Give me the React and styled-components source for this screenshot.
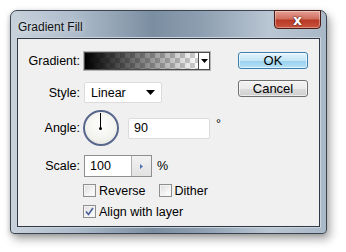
import styled, { createGlobalStyle } from "styled-components";

const GlobalStyle = createGlobalStyle`
  body {
    margin: 0;
    background: #ffffff;
    font-family: "Liberation Sans", Arial, sans-serif;
    font-size: 12px;
    color: #000;
  }
`;

const Page = styled.div`
  width: 346px;
  height: 252px;
  padding: 10px 0 0 10px;
  box-sizing: border-box;
`;

const Window = styled.div`
  width: 317px;
  height: 224px;
  box-sizing: border-box;
  border: 1px solid #3b4450;
  border-radius: 7px 7px 4px 4px;
  background: linear-gradient(
    90deg,
    #c7d1db 0%,
    #aebccb 20%,
    #7b8ea1 45%,
    #8d9eb0 60%,
    #b9c6d3 82%,
    #a9b8c7 100%
  );
  box-shadow: 3px 5px 10px rgba(0, 0, 0, 0.35), -1px 1px 4px rgba(0, 0, 0, 0.15);
  display: flex;
  flex-direction: column;
`;

const TitleBar = styled.div`
  height: 27px;
  display: flex;
  align-items: flex-start;
  justify-content: space-between;
  padding-left: 7px;
`;

const Title = styled.span`
  margin-top: 9px;
  font-size: 12px;
  color: #111;
  text-shadow: 0 0 6px rgba(255, 255, 255, 0.9);
`;

const CloseButton = styled.div`
  width: 47px;
  height: 19px;
  margin-right: 5px;
  margin-top: -1px;
  box-sizing: border-box;
  border: 1px solid #4a1a14;
  border-radius: 0 0 4px 4px;
  background: linear-gradient(180deg, #e3a196 0%, #d0705f 45%, #b83a26 55%, #c9553f 100%);
  box-shadow: inset 0 0 0 1px rgba(255, 255, 255, 0.35);
  display: flex;
  align-items: center;
  justify-content: center;
  color: #fff;
  font-weight: bold;
  font-size: 14px;
  line-height: 1;
  font-family: "DejaVu Sans", sans-serif;
  text-shadow: 0 0 2px #5a1a10, 0 0 1px #5a1a10;
`;

const Client = styled.div`
  flex: 1;
  margin: 0 6px 6px 6px;
  border: 1px solid #2f3844;
  box-shadow: 0 0 0 1px #c9d3dd;
  background: #f0f0f0;
  display: flex;
  padding: 13px 0 0 0;
`;

const Form = styled.div`
  width: 220px;
  display: flex;
  flex-direction: column;
`;

const Row = styled.div`
  display: flex;
  align-items: center;
  height: ${(p) => p.h}px;
  margin-top: ${(p) => p.mt || 0}px;
`;

const Label = styled.span`
  width: 62px;
  text-align: right;
  margin-right: 4px;
  font-size: 12.5px;
`;

const Indent = styled.div`
  width: 65px;
`;

const Swatch = styled.div`
  width: 126px;
  height: 18px;
  box-sizing: border-box;
  border: 1px solid #4a4a4a;
  outline: 1px solid #b4b4b4;
  display: flex;
  background: #fff;
`;

const Ramp = styled.div`
  flex: 1;
  background:
    linear-gradient(90deg, rgba(0, 0, 0, 1) 0%, rgba(0, 0, 0, 0) 100%),
    repeating-conic-gradient(#cfcfcf 0% 25%, #ffffff 0% 50%) 0 0 / 10px 10px;
`;

const SwatchArrow = styled.div`
  width: 10px;
  border-left: 1px solid #4a4a4a;
  display: flex;
  align-items: center;
  justify-content: center;
`;

const Select = styled.div`
  width: 78px;
  height: 21px;
  box-sizing: border-box;
  border: 1px solid #dcdcdc;
  border-radius: 2px;
  background: #fff;
  display: flex;
  align-items: center;
  justify-content: space-between;
  padding: 0 6px 0 6px;
  font-size: 12.5px;
`;

const Dial = styled.div`
  width: 36px;
  height: 36px;
  box-sizing: border-box;
  border-radius: 50%;
  border: 2px solid #58688c;
  background: radial-gradient(circle at 50% 40%, #ffffff 0%, #f2f2ee 60%, #dcdcd6 100%);
  position: relative;
  margin-left: -1px;
`;

const DialHand = styled.div`
  position: absolute;
  left: 15px;
  top: 1px;
  width: 1px;
  height: 15px;
  background: #000;
`;

const DialDot = styled.div`
  position: absolute;
  left: 14px;
  top: 15px;
  width: 3px;
  height: 3px;
  border-radius: 50%;
  background: #000;
`;

const Field = styled.div`
  width: ${(p) => p.w}px;
  height: ${(p) => p.hh}px;
  box-sizing: border-box;
  border: 1px solid #dcdcdc;
  border-radius: 2px;
  background: #fff;
  display: flex;
  align-items: center;
  padding-left: 5px;
  font-size: 12.5px;
  margin-left: ${(p) => p.ml || 0}px;
`;

const Unit = styled.span`
  margin-left: ${(p) => p.ml}px;
  margin-top: ${(p) => p.mt || 0}px;
  font-size: 12.5px;
`;

const ScaleBox = styled.div`
  width: 68px;
  height: 22px;
  box-sizing: border-box;
  border: 1px solid #8f8f8f;
  background: #fff;
  display: flex;
  font-size: 12.5px;
`;

const ScaleValue = styled.div`
  flex: 1;
  display: flex;
  align-items: center;
  padding-left: 5px;
`;

const Spin = styled.div`
  width: 19px;
  border-left: 1px solid #b0b0b0;
  background: linear-gradient(180deg, #f2f2f2 0%, #e2e2e2 100%);
  display: flex;
  align-items: center;
  justify-content: center;
`;

const Check = styled.label`
  display: flex;
  align-items: center;
  margin-right: ${(p) => p.mr || 0}px;
`;

const Box = styled.span`
  width: 13px;
  height: 13px;
  box-sizing: border-box;
  border: 1px solid #8e8f8f;
  background: linear-gradient(135deg, #dcdcdc 0%, #f4f4f4 60%, #fff 100%);
  box-shadow: inset 0 0 0 1px #f4f4f4;
  margin-right: 3px;
  display: flex;
  align-items: center;
  justify-content: center;
`;

const CheckText = styled.span`
  font-size: 12.5px;
`;

const Buttons = styled.div`
  display: flex;
  flex-direction: column;
  gap: 11px;
`;

const Button = styled.div`
  width: 70px;
  height: 17px;
  box-sizing: border-box;
  border-radius: 3px;
  border: 1px solid ${(p) => (p.primary ? "#3c7fb1" : "#707070")};
  background: ${(p) =>
    p.primary
      ? "linear-gradient(180deg, #e5f4fc 0%, #c4e5f6 50%, #98d1ef 51%, #b6e0f4 100%)"
      : "linear-gradient(180deg, #f2f2f2 0%, #ebebeb 50%, #dddddd 51%, #cfcfcf 100%)"};
  box-shadow: inset 0 0 0 1px rgba(255, 255, 255, 0.6);
  display: flex;
  align-items: center;
  justify-content: center;
  font-size: 13px;
`;

const Caret = () => (
  <svg width="9" height="5" viewBox="0 0 9 5">
    <path d="M0 0h9L4.5 5z" fill="#000" />
  </svg>
);

const SmallCaret = () => (
  <svg width="7" height="4" viewBox="0 0 7 4">
    <path d="M0 0h7L3.5 4z" fill="#000" />
  </svg>
);

const SpinArrow = () => (
  <svg width="3" height="5" viewBox="0 0 3 5">
    <path d="M0 0l3 2.5L0 5z" fill="#4f6fb3" />
  </svg>
);

const Tick = () => (
  <svg width="9" height="9" viewBox="0 0 9 9">
    <path d="M1 4.5l2.5 3L8 1" fill="none" stroke="#4a5f97" strokeWidth="1.6" />
  </svg>
);

export default function App() {
  return (
    <>
      <GlobalStyle />
      <Page>
        <Window>
          <TitleBar>
            <Title>Gradient Fill</Title>
            <CloseButton>x</CloseButton>
          </TitleBar>
          <Client>
            <Form>
              <Row h={18}>
                <Label>Gradient:</Label>
                <Swatch>
                  <Ramp />
                  <SwatchArrow>
                    <SmallCaret />
                  </SwatchArrow>
                </Swatch>
              </Row>
              <Row h={21} mt={12}>
                <Label>Style:</Label>
                <Select>
                  Linear
                  <Caret />
                </Select>
              </Row>
              <Row h={36} mt={7}>
                <Label>Angle:</Label>
                <Dial>
                  <DialHand />
                  <DialDot />
                </Dial>
                <Field w={82} hh={21} ml={9}>90</Field>
                <Unit ml={6} mt={-8}>°</Unit>
              </Row>
              <Row h={22} mt={9}>
                <Label>Scale:</Label>
                <ScaleBox>
                  <ScaleValue>100</ScaleValue>
                  <Spin>
                    <SpinArrow />
                  </Spin>
                </ScaleBox>
                <Unit ml={5}>%</Unit>
              </Row>
              <Row h={13} mt={7}>
                <Indent />
                <Check mr={13}>
                  <Box />
                  <CheckText>Reverse</CheckText>
                </Check>
                <Check>
                  <Box />
                  <CheckText>Dither</CheckText>
                </Check>
              </Row>
              <Row h={13} mt={8}>
                <Indent />
                <Check>
                  <Box>
                    <Tick />
                  </Box>
                  <CheckText>Align with layer</CheckText>
                </Check>
              </Row>
            </Form>
            <Buttons>
              <Button primary>OK</Button>
              <Button>Cancel</Button>
            </Buttons>
          </Client>
        </Window>
      </Page>
    </>
  );
}
